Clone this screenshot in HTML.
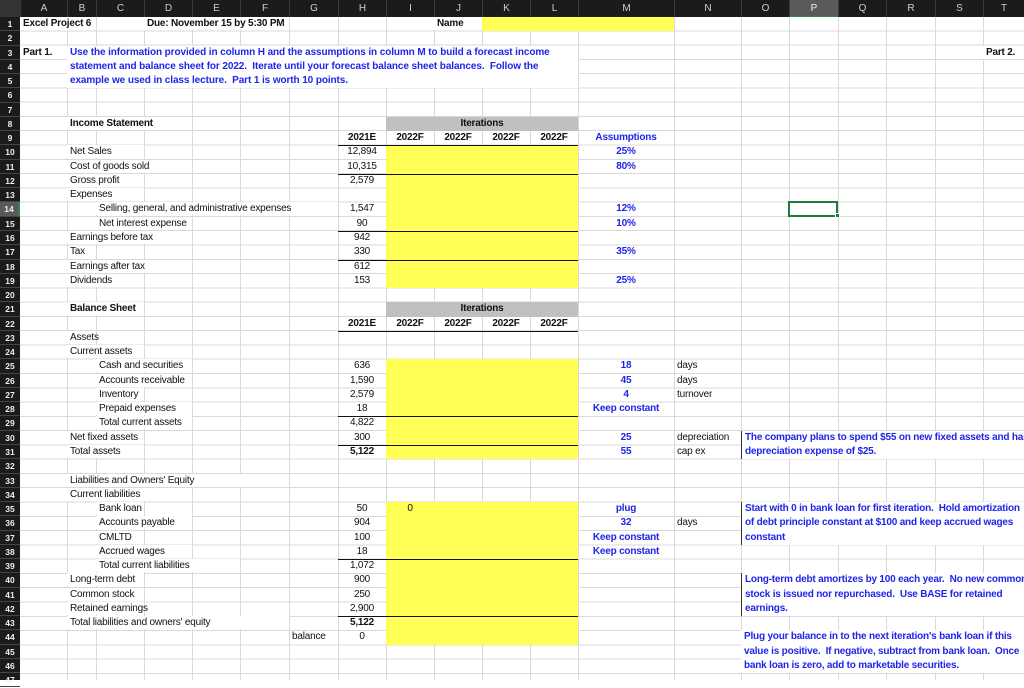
<!DOCTYPE html>
<html><head><meta charset="utf-8"><style>
*{margin:0;padding:0;box-sizing:border-box}
body{width:1024px;height:680px;overflow:hidden;background:#fff;font-family:"Liberation Sans",Arial,sans-serif;position:relative}
#top{position:absolute;left:0;top:0;width:1024px;height:17px;background:#1b1b1b}
#top div{position:absolute;top:0;height:17px;line-height:17px;text-align:center;color:#d0d0d0;font-size:10px;border-left:1px solid #3a3a3a}
#left{position:absolute;left:0;top:17px;width:20px;height:663px;background:#1b1b1b;display:grid;grid-template-rows:repeat(47,14.28px)}
#left div{color:#eee;font-size:8.5px;font-weight:bold;text-align:center;line-height:14.28px;border-bottom:1px solid #444}
#g{position:absolute;left:20px;top:17px;width:1004px;height:663px;display:grid;
grid-template-columns:47px 29px 48px 48px 48px 49px 49px 48px 48px 48px 48px 48px 96px 67px 48px 49px 48px 49px 48px 41px;
grid-template-rows:repeat(47,14.28px);
background-image:repeating-linear-gradient(to bottom,transparent 0,transparent 13.28px,#d9d9d9 13.28px,#d9d9d9 14.28px);}
#g>div{white-space:nowrap;font-size:10px;line-height:14.28px;padding:0 3px;letter-spacing:-0.2px;color:#111;position:relative}
.v{position:absolute;top:17px;width:1px;height:663px;background:#d9d9d9}
#g>.w{background:linear-gradient(#fff,#fff) 0 0/100% 13px no-repeat}
.b{font-weight:bold}
.c{text-align:center}
#g>.bl{color:#1f25e8;font-weight:bold}
.y{background:#ffff55}
.gr{background:#c0c0c0}
.t{border-top:1px solid #111}
#g>.n{line-height:14.28px;font-size:10px;color:#1f25e8;font-weight:bold;background:#fff;border-left:1.5px solid #333;padding-left:3px;white-space:nowrap;overflow:hidden}
</style></head><body>
<div id="top">
<div style="left:20px;width:47px">A</div><div style="left:67px;width:29px">B</div><div style="left:96px;width:48px">C</div><div style="left:144px;width:48px">D</div><div style="left:192px;width:48px">E</div><div style="left:240px;width:49px">F</div><div style="left:289px;width:49px">G</div><div style="left:338px;width:48px">H</div><div style="left:386px;width:48px">I</div><div style="left:434px;width:48px">J</div><div style="left:482px;width:48px">K</div><div style="left:530px;width:48px">L</div><div style="left:578px;width:96px">M</div><div style="left:674px;width:67px">N</div><div style="left:741px;width:48px">O</div><div style="left:789px;width:49px;background:#5a5a5a;border-bottom:1px solid #2d8a4a;color:#eee">P</div><div style="left:838px;width:48px">Q</div><div style="left:886px;width:49px">R</div><div style="left:935px;width:48px">S</div><div style="left:983px;width:41px">T</div>
<div style="left:0;width:20px;border:none;background:#333"></div>
</div>
<div id="left">
<div>1</div><div>2</div><div>3</div><div>4</div><div>5</div><div>6</div><div>7</div><div>8</div><div>9</div><div>10</div><div>11</div><div>12</div><div>13</div><div style="background:#5a5a5a;border-right:2px solid #2d8a4a">14</div><div>15</div><div>16</div><div>17</div><div>18</div><div>19</div><div>20</div><div>21</div><div>22</div><div>23</div><div>24</div><div>25</div><div>26</div><div>27</div><div>28</div><div>29</div><div>30</div><div>31</div><div>32</div><div>33</div><div>34</div><div>35</div><div>36</div><div>37</div><div>38</div><div>39</div><div>40</div><div>41</div><div>42</div><div>43</div><div>44</div><div>45</div><div>46</div><div>47</div>
</div>
<div class="v" style="left:67px"></div><div class="v" style="left:96px"></div><div class="v" style="left:144px"></div><div class="v" style="left:192px"></div><div class="v" style="left:240px"></div><div class="v" style="left:289px"></div><div class="v" style="left:338px"></div><div class="v" style="left:386px"></div><div class="v" style="left:434px"></div><div class="v" style="left:482px"></div><div class="v" style="left:530px"></div><div class="v" style="left:578px"></div><div class="v" style="left:674px"></div><div class="v" style="left:741px"></div><div class="v" style="left:789px"></div><div class="v" style="left:838px"></div><div class="v" style="left:886px"></div><div class="v" style="left:935px"></div><div class="v" style="left:983px"></div>
<div id="g">
<div class="w b" style="grid-area:1/1/2/3">Excel Project 6</div>
<div class="w b" style="grid-area:1/4/2/7">Due: November 15 by 5:30 PM</div>
<div class="w b" style="grid-area:1/10">Name</div>
<div class="y" style="grid-area:1/11/2/14"></div>
<div class="w b" style="grid-area:3/1">Part 1.</div>
<div class="bl" style="grid-area:3/2/6/13;background:#fff;line-height:14.28px;letter-spacing:-0.1px">Use the information provided in column H and the assumptions in column M to build a forecast income<br>statement and balance sheet for 2022.&nbsp; Iterate until your forecast balance sheet balances.&nbsp; Follow the<br>example we used in class lecture.&nbsp; Part 1 is worth 10 points.</div>
<div class="w b" style="grid-area:3/20">Part 2.</div>

<div class="w b" style="grid-area:8/2/9/5">Income Statement</div>
<div class="gr b c" style="grid-area:8/9/9/13">Iterations</div>
<div class="b c" style="grid-area:9/8">2021E</div>
<div class="b c" style="grid-area:9/9">2022F</div><div class="b c" style="grid-area:9/10">2022F</div><div class="b c" style="grid-area:9/11">2022F</div><div class="b c" style="grid-area:9/12">2022F</div>
<div class="bl c" style="grid-area:9/13">Assumptions</div>
<div class="y" style="grid-area:10/9/20/13"></div>
<div class="t" style="grid-area:10/8/11/13"></div>
<div class="t" style="grid-area:12/8/13/13"></div>
<div class="t" style="grid-area:16/8/17/13"></div>
<div class="t" style="grid-area:18/8/19/13"></div>
<div class="w" style="grid-area:10/2/11/4">Net Sales</div>
<div class="w" style="grid-area:11/2/12/5">Cost of goods sold</div>
<div class="w" style="grid-area:12/2/13/4">Gross profit</div>
<div class="w" style="grid-area:13/2/14/4">Expenses</div>
<div class="w" style="grid-area:14/3/15/8">Selling, general, and administrative expenses</div>
<div class="w" style="grid-area:15/3/16/5">Net interest expense</div>
<div class="w" style="grid-area:16/2/17/5">Earnings before tax</div>
<div style="grid-area:17/2">Tax</div>
<div class="w" style="grid-area:18/2/19/5">Earnings after tax</div>
<div class="w" style="grid-area:19/2/20/4">Dividends</div>
<div class="c" style="grid-area:10/8">12,894</div><div class="c" style="grid-area:11/8">10,315</div><div class="c" style="grid-area:12/8">2,579</div><div class="c" style="grid-area:14/8">1,547</div><div class="c" style="grid-area:15/8">90</div><div class="c" style="grid-area:16/8">942</div><div class="c" style="grid-area:17/8">330</div><div class="c" style="grid-area:18/8">612</div><div class="c" style="grid-area:19/8">153</div>
<div class="bl c" style="grid-area:10/13">25%</div><div class="bl c" style="grid-area:11/13">80%</div><div class="bl c" style="grid-area:14/13">12%</div><div class="bl c" style="grid-area:15/13">10%</div><div class="bl c" style="grid-area:17/13">35%</div><div class="bl c" style="grid-area:19/13">25%</div>

<div class="w b" style="grid-area:21/2/22/4">Balance Sheet</div>
<div class="gr b c" style="grid-area:21/9/22/13">Iterations</div>
<div class="b c" style="grid-area:22/8">2021E</div>
<div class="b c" style="grid-area:22/9">2022F</div><div class="b c" style="grid-area:22/10">2022F</div><div class="b c" style="grid-area:22/11">2022F</div><div class="b c" style="grid-area:22/12">2022F</div>
<div class="t" style="grid-area:23/8/24/13"></div>
<div class="w" style="grid-area:23/2">Assets</div>
<div class="w" style="grid-area:24/2/25/4">Current assets</div>
<div class="y" style="grid-area:25/9/32/13"></div>
<div class="t" style="grid-area:29/8/30/13"></div>
<div class="t" style="grid-area:31/8/32/13"></div>
<div class="w" style="grid-area:25/3/26/5">Cash and securities</div>
<div class="w" style="grid-area:26/3/27/5">Accounts receivable</div>
<div class="w" style="grid-area:27/3">Inventory</div>
<div class="w" style="grid-area:28/3/29/5">Prepaid expenses</div>
<div class="w" style="grid-area:29/3/30/5">Total current assets</div>
<div class="w" style="grid-area:30/2/31/4">Net fixed assets</div>
<div class="w" style="grid-area:31/2/32/4">Total assets</div>
<div class="c" style="grid-area:25/8">636</div><div class="c" style="grid-area:26/8">1,590</div><div class="c" style="grid-area:27/8">2,579</div><div class="c" style="grid-area:28/8">18</div><div class="c" style="grid-area:29/8">4,822</div><div class="c" style="grid-area:30/8">300</div><div class="c b" style="grid-area:31/8">5,122</div>
<div class="bl c" style="grid-area:25/13">18</div><div class="bl c" style="grid-area:26/13">45</div><div class="bl c" style="grid-area:27/13">4</div><div class="bl c" style="grid-area:28/13">Keep constant</div><div class="bl c" style="grid-area:30/13">25</div><div class="bl c" style="grid-area:31/13">55</div>
<div style="grid-area:25/14">days</div><div style="grid-area:26/14">days</div><div style="grid-area:27/14">turnover</div><div style="grid-area:30/14">depreciation</div><div style="grid-area:31/14">cap ex</div>
<div class="n" style="grid-area:30/15/32/21">The company plans to spend $55 on new fixed assets and has a<br>depreciation expense of $25.</div>

<div class="w" style="grid-area:33/2/34/7">Liabilities and Owners' Equity</div>
<div class="w" style="grid-area:34/2/35/5">Current liabilities</div>
<div class="y" style="grid-area:35/9/45/13"></div>
<div class="t" style="grid-area:39/8/40/13"></div>
<div class="t" style="grid-area:43/8/44/13"></div>
<div class="c" style="grid-area:35/9">0</div>
<div class="w" style="grid-area:35/3">Bank loan</div>
<div class="w" style="grid-area:36/3/37/5">Accounts payable</div>
<div class="w" style="grid-area:37/3">CMLTD</div>
<div class="w" style="grid-area:38/3/39/5">Accrued wages</div>
<div class="w" style="grid-area:39/3/40/6">Total current liabilities</div>
<div class="w" style="grid-area:40/2/41/4">Long-term debt</div>
<div class="w" style="grid-area:41/2/42/4">Common stock</div>
<div class="w" style="grid-area:42/2/43/4">Retained earnings</div>
<div class="w" style="grid-area:43/2/44/7">Total liabilities and owners' equity</div>
<div style="grid-area:44/7">balance</div>
<div class="c" style="grid-area:35/8">50</div><div class="c" style="grid-area:36/8">904</div><div class="c" style="grid-area:37/8">100</div><div class="c" style="grid-area:38/8">18</div><div class="c" style="grid-area:39/8">1,072</div><div class="c" style="grid-area:40/8">900</div><div class="c" style="grid-area:41/8">250</div><div class="c" style="grid-area:42/8">2,900</div><div class="c b" style="grid-area:43/8">5,122</div><div class="c" style="grid-area:44/8">0</div>
<div class="bl c" style="grid-area:35/13">plug</div><div class="bl c" style="grid-area:36/13">32</div><div class="bl c" style="grid-area:37/13">Keep constant</div><div class="bl c" style="grid-area:38/13">Keep constant</div>
<div style="grid-area:36/14">days</div>
<div class="n" style="grid-area:35/15/38/21">Start with 0 in bank loan for first iteration.&nbsp; Hold amortization<br>of debt principle constant at $100 and keep accrued wages<br>constant</div>
<div class="n" style="grid-area:40/15/43/21">Long-term debt amortizes by 100 each year.&nbsp; No new common<br>stock is issued nor repurchased.&nbsp; Use BASE for retained<br>earnings.</div>
<div class="n" style="grid-area:44/15/47/21;border-left:none">Plug your balance in to the next iteration's bank loan if this<br>value is positive.&nbsp; If negative, subtract from bank loan.&nbsp; Once<br>bank loan is zero, add to marketable securities.</div>
<div style="grid-area:14/16;border:2px solid #1e7a3e;margin:-1px 0 0 -1px"></div>
</div>
<div style="position:absolute;left:835px;top:213px;width:5px;height:5px;background:#1e7a3e;border:1px solid #fff"></div>
</body></html>
